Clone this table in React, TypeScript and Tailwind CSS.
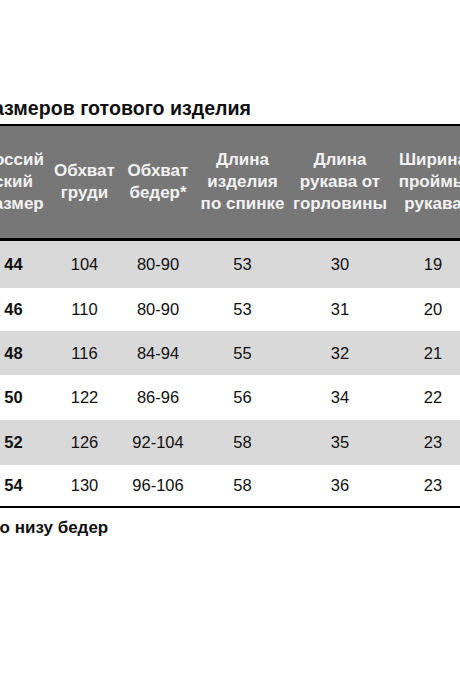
import React from 'react';

type Row = {
  size: string;
  chest: string;
  hips: string;
  back: string;
  sleeve: string;
  armhole: string;
  bg: string;
  h: string;
};

const rows: Row[] = [
  { size: '44', chest: '104', hips: '80-90', back: '53', sleeve: '30', armhole: '19', bg: 'bg-[#d9d9d9]', h: 'h-[47px]' },
  { size: '46', chest: '110', hips: '80-90', back: '53', sleeve: '31', armhole: '20', bg: 'bg-white', h: 'h-[43px]' },
  { size: '48', chest: '116', hips: '84-94', back: '55', sleeve: '32', armhole: '21', bg: 'bg-[#d9d9d9]', h: 'h-[44px]' },
  { size: '50', chest: '122', hips: '86-96', back: '56', sleeve: '34', armhole: '22', bg: 'bg-white', h: 'h-[45px]' },
  { size: '52', chest: '126', hips: '92-104', back: '58', sleeve: '35', armhole: '23', bg: 'bg-[#d9d9d9]', h: 'h-[45px]' },
  { size: '54', chest: '130', hips: '96-106', back: '58', sleeve: '36', armhole: '23', bg: 'bg-white', h: 'h-[41px]' },
];

const headers: string[][] = [
  ['Россий', 'ский', 'размер'],
  ['Обхват', 'груди'],
  ['Обхват', 'бедер*'],
  ['Длина', 'изделия', 'по спинке'],
  ['Длина', 'рукава от', 'горловины'],
  ['Ширина', 'проймы', 'рукава'],
];

const cols = 'grid grid-cols-[71px_71px_76px_93px_102px_84px]';

export default function App() {
  return (
    <div className="w-[460px] h-[690px] overflow-hidden bg-white text-[#111] font-['Liberation_Sans',Arial,sans-serif]">
      <div className="pt-[97px] ml-[-22px] w-[497px]">
        <div className="w-[273px] h-[22px] flex justify-end whitespace-nowrap text-[19.6px] leading-[22px] font-bold mb-[5px]">
          Таблица размеров готового изделия
        </div>

        <div className="border-t-2 border-black">
          <div className={`${cols} h-[115px] bg-[#777777] border-b-[3px] border-black`}>
            {headers.map((lines, i) => (
              <div
                key={i}
                className="flex flex-col items-center justify-center text-[17px] leading-[22px] font-bold text-[#f2f2f2] whitespace-nowrap"
              >
                {lines.map((l) => (
                  <span key={l}>{l}</span>
                ))}
              </div>
            ))}
          </div>

          {rows.map((r) => (
            <div key={r.size} className={`${cols} ${r.h} ${r.bg} text-[16.5px] items-center text-center`}>
              <div className="font-bold">{r.size}</div>
              <div>{r.chest}</div>
              <div>{r.hips}</div>
              <div>{r.back}</div>
              <div>{r.sleeve}</div>
              <div>{r.armhole}</div>
            </div>
          ))}
          <div className="border-t-2 border-black" />
        </div>

        <div className="mt-[9px] text-[17px] leading-[22px] font-bold whitespace-nowrap">* по низу бедер</div>
      </div>
    </div>
  );
}
